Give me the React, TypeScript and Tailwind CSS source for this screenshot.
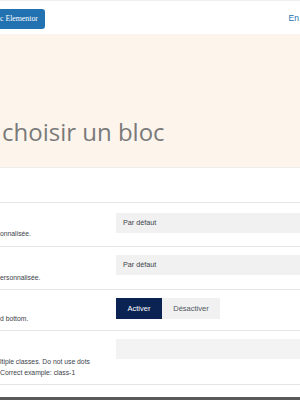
import React from 'react';

const sans = { fontFamily: '"Liberation Sans", Arial, sans-serif' };

const Row: React.FC<{ h: string; textPad: string; children: React.ReactNode; right: React.ReactNode; rightPad: string }> = ({
  h,
  textPad,
  children,
  right,
  rightPad
}) => (
  <div className={`flex border-t border-[#e6e6e6] ${h}`}>
    <div className={`w-[116px] shrink-0 text-[6.8px] leading-[11px] text-[#3c434a] ${textPad}`}>{children}</div>
    <div className={`flex-1 ${rightPad}`}>{right}</div>
  </div>
);

const Select: React.FC = () => (
  <div className="h-[20px] w-[200px] bg-[#f1f1f1] flex items-center pl-[7px] text-[7.2px] text-[#3c434a]">
    Par défaut
  </div>
);

export default function App() {
  return (
    <div className="w-[300px] h-[400px] overflow-hidden bg-white flex flex-col" style={sans}>
      {/* Barre du haut */}
      <div className="h-[34px] shrink-0 border-t border-[#f0f0f0] flex items-center justify-between">
        <div className="h-[20px] mt-[2px] bg-[#2271b1] rounded-r-[3px] flex items-center pr-[7px] pl-0 text-white text-[7.8px] font-['Liberation_Serif',serif] whitespace-nowrap">
          c Elementor
        </div>
        <span className="text-[8.5px] text-[#2271b1] mr-[1px] mt-[2px]">En</span>
      </div>

      {/* Bandeau */}
      <div className="h-[134px] shrink-0 bg-[#fdf5ec] border-b border-[#ececec] pt-[82px]">
        <h1 className="ml-[2px] text-[24px] leading-[32px] text-[#7a7a7a] font-['Open_Sans',sans-serif] font-normal whitespace-nowrap">
          choisir un bloc
        </h1>
      </div>

      <div className="h-[34px] shrink-0" />

      {/* Réglages */}
      <Row h="h-[44px]" textPad="pt-[25px]" rightPad="pt-[10px]" right={<Select />}>
        onnalisée.
      </Row>
      <Row h="h-[43px]" textPad="pt-[25px]" rightPad="pt-[8px]" right={<Select />}>
        ersonnalisée.
      </Row>
      <Row
        h="h-[41px]"
        textPad="pt-[23px]"
        rightPad="pt-[8px]"
        right={
          <div className="flex text-[7.5px]">
            <button className="h-[21px] w-[46px] bg-[#0b2352] text-white font-normal">Activer</button>
            <button className="h-[21px] w-[58px] bg-[#f1f1f1] text-[#50575e] font-normal">Désactiver</button>
          </div>
        }
      >
        d bottom.
      </Row>
      <Row
        h="h-[55px] border-b"
        textPad="pt-[25px]"
        rightPad="pt-[8px]"
        right={<div className="h-[20px] w-[200px] bg-[#f3f3f3]" />}
      >
        <div className="whitespace-nowrap">ltiple classes. Do not use dots</div>
        <div className="whitespace-nowrap">Correct example: class-1</div>
      </Row>

      <div className="flex-1" />
      <div className="h-[3px] shrink-0 bg-[#5a5a5a]" />
    </div>
  );
}
